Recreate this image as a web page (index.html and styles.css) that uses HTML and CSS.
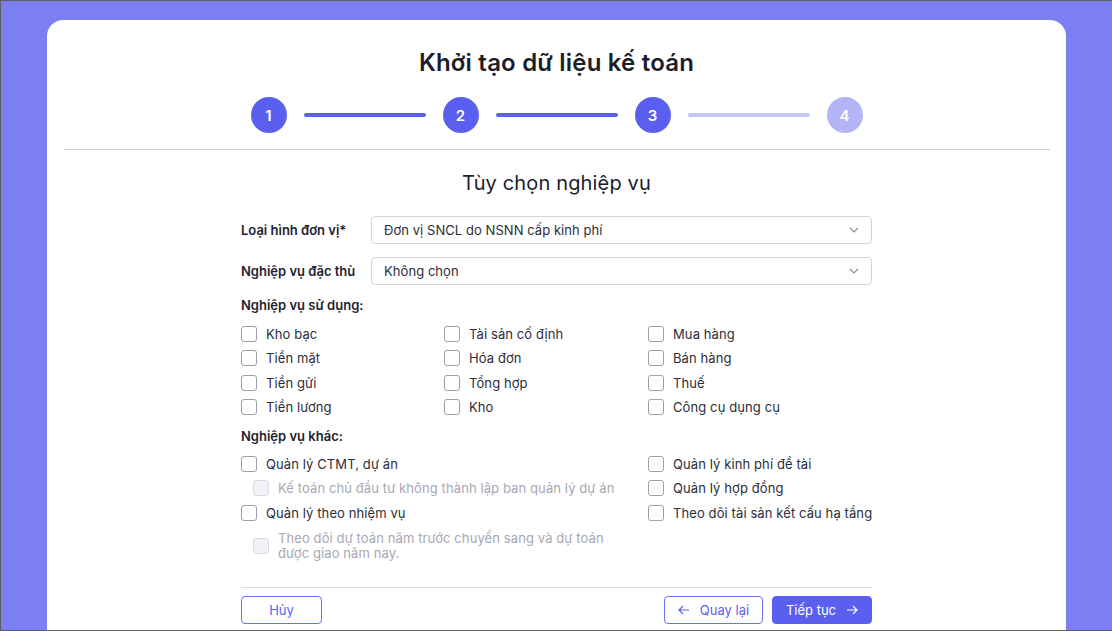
FILE: index.html
```html
<!DOCTYPE html>
<html lang="vi">
<head>
<meta charset="utf-8">
<title>Khởi tạo dữ liệu kế toán</title>
<link rel="stylesheet" href="styles.css">
</head>
<body>
<div class="card">
  <h1 class="title">Khởi tạo dữ liệu kế toán</h1>
  <div class="stepper">
    <span class="step">1</span><span class="bar"></span>
    <span class="step">2</span><span class="bar"></span>
    <span class="step">3</span><span class="bar bar-off"></span>
    <span class="step step-off">4</span>
  </div>
  <div class="divider"></div>
  <div class="content">
    <h2 class="subtitle">Tùy chọn nghiệp vụ</h2>
    <div class="field">
      <label class="field-label">Loại hình đơn vị*</label>
      <div class="select"><span>Đơn vị SNCL do NSNN cấp kinh phí</span>
        <svg class="chev" width="10" height="6" viewBox="0 0 10 6"><path d="M1 1l4 4 4-4" fill="none" stroke="#8a8c9c" stroke-width="1.1"/></svg>
      </div>
    </div>
    <div class="field">
      <label class="field-label">Nghiệp vụ đặc thù</label>
      <div class="select"><span>Không chọn</span>
        <svg class="chev" width="10" height="6" viewBox="0 0 10 6"><path d="M1 1l4 4 4-4" fill="none" stroke="#8a8c9c" stroke-width="1.1"/></svg>
      </div>
    </div>
    <div class="section-label first">Nghiệp vụ sử dụng:</div>
    <div class="grid">
      <label class="check"><span class="box"></span>Kho bạc</label>
      <label class="check"><span class="box"></span>Tài sản cố định</label>
      <label class="check"><span class="box"></span>Mua hàng</label>
      <label class="check"><span class="box"></span>Tiền mặt</label>
      <label class="check"><span class="box"></span>Hóa đơn</label>
      <label class="check"><span class="box"></span>Bán hàng</label>
      <label class="check"><span class="box"></span>Tiền gửi</label>
      <label class="check"><span class="box"></span>Tổng hợp</label>
      <label class="check"><span class="box"></span>Thuế</label>
      <label class="check"><span class="box"></span>Tiền lương</label>
      <label class="check"><span class="box"></span>Kho</label>
      <label class="check"><span class="box"></span>Công cụ dụng cụ</label>
    </div>
    <div class="section-label">Nghiệp vụ khác:</div>
    <div class="other">
      <div class="col col-left">
        <label class="check"><span class="box"></span>Quản lý CTMT, dự án</label>
        <label class="check sub disabled"><span class="box"></span>Kế toán chủ đầu tư không thành lập ban quản lý dự án</label>
        <label class="check"><span class="box"></span>Quản lý theo nhiệm vụ</label>
        <label class="check sub disabled multi"><span class="box"></span><span class="txt">Theo dõi dự toán năm trước chuyển sang và dự toán được giao năm nay.</span></label>
      </div>
      <div class="col">
        <label class="check"><span class="box"></span>Quản lý kinh phí đề tài</label>
        <label class="check"><span class="box"></span>Quản lý hợp đồng</label>
        <label class="check"><span class="box"></span>Theo dõi tài sản kết cấu hạ tầng</label>
      </div>
    </div>
    <div class="footer">
      <button class="btn btn-outline btn-cancel">Hủy</button>
      <div class="actions">
        <button class="btn btn-outline btn-back">
          <svg width="12" height="10" viewBox="0 0 12 10"><path d="M11 5H1.5M5 1L1 5l4 4" fill="none" stroke="#5b5fef" stroke-width="1.2"/></svg>
          Quay lại</button>
        <button class="btn btn-primary btn-next">Tiếp tục
          <svg width="12" height="10" viewBox="0 0 12 10"><path d="M1 5h9.5M7 1l4 4-4 4" fill="none" stroke="#ffffff" stroke-width="1.2"/></svg>
        </button>
      </div>
    </div>
  </div>
</div>
</body>
</html>
```

FILE: styles.css
```css
* { box-sizing: border-box; }
html, body { margin: 0; padding: 0; }
body {
  width: 1112px;
  height: 631px;
  overflow: hidden;
  background: #7b7ff2;
  border: 1px solid #5f5f5f;
  border-right: none;
  font-family: Inter, "Noto Sans", sans-serif;
  color: #22232f;
}
.card {
  margin: 19px 0 0 46px;
  width: 1019px;
  height: 610px;
  background: #ffffff;
  border-radius: 16px 16px 0 0;
  display: flex;
  flex-direction: column;
  align-items: center;
  padding-top: 28px;
}
.title {
  margin: 0;
  font-size: 24px;
  line-height: 30px;
  font-weight: 600;
  letter-spacing: 0.2px;
  color: #1c1d29;
}
.stepper {
  margin-top: 19px;
  display: flex;
  align-items: center;
  gap: 17px;
}
.step {
  width: 36px;
  height: 36px;
  border-radius: 50%;
  background: #5b5fef;
  color: #fff;
  font-size: 15px;
  font-weight: 600;
  display: flex;
  align-items: center;
  justify-content: center;
}
.step-off { background: #b3b5f6; }
.bar {
  width: 122px;
  height: 4px;
  border-radius: 2px;
  background: #5b5fef;
}
.bar-off { background: #c5c7f9; }
.divider {
  align-self: stretch;
  margin: 16px 16px 0 17px;
  height: 1px;
  background: #c9c9d1;
}
.content {
  width: 631px;
  display: flex;
  flex-direction: column;
}
.subtitle {
  margin: 21px 0 0;
  text-align: center;
  font-size: 20px;
  line-height: 24px;
  font-weight: 400;
  letter-spacing: 0.15px;
  color: #1c1d29;
}
.field {
  display: flex;
  align-items: center;
  margin-top: 13px;
}
.subtitle + .field { margin-top: 21px; }
.field-label {
  width: 130px;
  font-size: 13px;
  font-weight: 600;
  color: #22232f;
}
.select {
  flex: 1;
  height: 28px;
  border: 1px solid #d3d3dc;
  border-radius: 4px;
  display: flex;
  align-items: center;
  justify-content: space-between;
  padding: 0 12px 0 12px;
  font-size: 13px;
  letter-spacing: 0.06px;
  color: #2c2d38;
}
.section-label {
  margin-top: 13px;
  font-size: 13px;
  line-height: 16px;
  font-weight: 600;
  color: #22232f;
}
.section-label.first { margin-top: 12px; }
.grid {
  margin-top: 13px;
  display: grid;
  grid-template-columns: 203px 204px 1fr;
  row-gap: 8.3px;
}
.check {
  display: flex;
  align-items: center;
  gap: 9px;
  font-size: 13px;
  line-height: 16px;
  letter-spacing: 0.1px;
  white-space: nowrap;
  color: #2c2d38;
}
.box {
  flex: none;
  width: 16px;
  height: 16px;
  border: 1.3px solid #9c9dad;
  border-radius: 3px;
  background: #fff;
}
.other {
  margin-top: 12px;
  display: flex;
}
.col {
  display: flex;
  flex-direction: column;
  gap: 8.5px;
}
.col-left { width: 407px; flex: none; }
.sub { padding-left: 12px; }
.disabled { color: #a6a7b5; }
.disabled .box { background: #f1f1f5; border-color: #dadae2; }
.multi { line-height: 15px; margin-top: 2px; }
.multi .txt { width: 345px; white-space: normal; }
.footer {
  margin-top: 26px;
  border-top: 1px solid #d9d9e8;
  padding-top: 8px;
  display: flex;
  justify-content: space-between;
}
.actions { display: flex; gap: 9px; }
.btn {
  height: 28px;
  border-radius: 4px;
  font-family: inherit;
  font-size: 13px;
  display: flex;
  align-items: center;
  justify-content: center;
  gap: 10px;
  padding: 0;
  cursor: pointer;
}
.btn-outline {
  background: #fff;
  border: 1px solid #6b6ff0;
  color: #5b5fef;
}
.btn-primary {
  background: #5b5fef;
  border: 1px solid #5b5fef;
  color: #fff;
}
.btn-cancel { width: 81px; }
.btn-back { width: 99px; }
.btn-next { width: 100px; }
```
